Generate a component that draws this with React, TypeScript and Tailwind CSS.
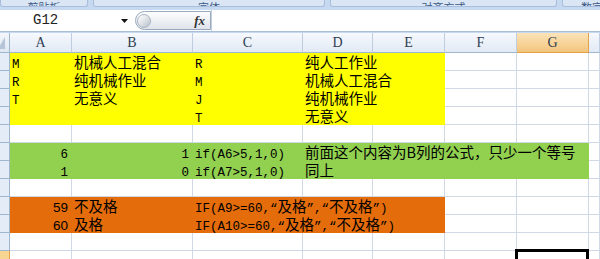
import type { ReactNode } from "react";

type Fill = "y" | "g" | "o";

type Cell = { v: ReactNode; right?: boolean };
type Row = { fill?: Fill; fillCols?: number; cells?: Record<number, Cell>; active?: boolean };

const colW = ["w-[62px]", "w-[121px]", "w-[110px]", "w-[70px]", "w-[72px]", "w-[72px]", "w-[72px]", "w-[11px]"];
const letters = ["A", "B", "C", "D", "E", "F", "G", "H"];

const fillCls: Record<Fill, string> = {
  y: "bg-[#ffff00] border-[#ffff00]",
  g: "bg-[#92d050] border-[#92d050]",
  o: "bg-[#e46c0a] border-[#e46c0a]",
};

const L = (s: string) => <span className="font-['Liberation_Mono',monospace] text-[12.5px]">{s}</span>;
const C = (s: string) => <span>{s}</span>;
const N = (s: string) => <span className="font-['Liberation_Sans',sans-serif] text-[13.5px]">{s}</span>;

const rows: Row[] = [
  { fill: "y", fillCols: 5, cells: { 0: { v: L("M") }, 1: { v: C("机械人工混合") }, 2: { v: L("R") }, 3: { v: C("纯人工作业") } } },
  { fill: "y", fillCols: 5, cells: { 0: { v: L("R") }, 1: { v: C("纯机械作业") }, 2: { v: L("M") }, 3: { v: C("机械人工混合") } } },
  { fill: "y", fillCols: 5, cells: { 0: { v: L("T") }, 1: { v: C("无意义") }, 2: { v: L("J") }, 3: { v: C("纯机械作业") } } },
  { fill: "y", fillCols: 5, cells: { 2: { v: L("T") }, 3: { v: C("无意义") } } },
  {},
  {
    fill: "g",
    fillCols: 7,
    cells: {
      0: { v: L("6"), right: true },
      1: { v: L("1"), right: true },
      2: { v: L("if(A6>5,1,0)") },
      3: { v: C("前面这个内容为B列的公式，只少一个等号") },
    },
  },
  {
    fill: "g",
    fillCols: 7,
    cells: { 0: { v: L("1"), right: true }, 1: { v: L("0"), right: true }, 2: { v: L("if(A7>5,1,0)") }, 3: { v: C("同上") } },
  },
  {},
  {
    fill: "o",
    fillCols: 5,
    cells: {
      0: { v: N("59"), right: true },
      1: { v: C("不及格") },
      2: { v: <>{L("IF(A9>=60,“")}{C("及格")}{L("”,“")}{C("不及格")}{L("”)")}</> },
    },
  },
  {
    fill: "o",
    fillCols: 5,
    cells: {
      0: { v: N("60"), right: true },
      1: { v: C("及格") },
      2: { v: <>{L("IF(A10>=60,“")}{C("及格")}{L("”,“")}{C("不及格")}{L("”)")}</> },
    },
  },
  {},
  { active: true },
];

function RibbonStrip() {
  const groups = [
    { w: "w-[88px]", label: "剪贴板" },
    { w: "w-[232px]", label: "字体" },
    { w: "w-[227px]", label: "对齐方式" },
    { w: "w-[60px]", label: "数字" },
  ];
  return (
    <div className="flex h-[7px] gap-[5px] overflow-hidden bg-[#c6d9f0]">
      {groups.map((g) => (
        <div
          key={g.label}
          className={`${g.w} flex shrink-0 items-end justify-center overflow-hidden rounded-b-[3px] border-b border-x border-[#a7bfdd] bg-[#dbe6f4]`}
        >
          <span className="-mb-[7px] font-['Noto_Sans_CJK_SC',sans-serif] text-[11px] leading-[11px] text-[#3c5a87]">
            {g.label}
          </span>
        </div>
      ))}
    </div>
  );
}

function FormulaBar() {
  return (
    <div className="flex h-[22px] border-b border-[#a9bfd6] bg-white">
      <div className="flex w-[135px] shrink-0 items-center">
        <span className="ml-[33px] font-['Liberation_Mono',monospace] text-[14px] text-[#222]">G12</span>
        <svg className="ml-[63px]" width="7" height="4" viewBox="0 0 7 4">
          <path d="M0 0h7L3.5 4z" fill="#111" />
        </svg>
      </div>
      <div className="my-[1px] flex w-[76px] shrink-0 items-center rounded-l-full border border-[#9aa9bd] bg-linear-to-b from-[#fdfdfe] via-[#eef1f5] to-[#dfe4eb]">
        <div className="ml-[1px] h-[14px] w-[14px] rounded-full border border-[#a9b3c0] bg-linear-to-br from-white via-[#dfe3e8] to-[#b8c0ca]" />
        <span className="ml-auto mr-[5px] font-['Liberation_Serif',serif] text-[13px] font-bold italic text-[#333]">
          fx
        </span>
      </div>
      <div className="flex-1 border-l border-[#c3cfdd] bg-white" />
    </div>
  );
}

function HeaderRow() {
  return (
    <div className="flex h-[20px]">
      <div className="relative w-[10px] shrink-0 border-r border-b border-[#9eb6ce] bg-linear-to-b from-[#f4f7fb] to-[#dfe7f2]">
        <svg className="absolute left-0 bottom-[3px]" width="7" height="12" viewBox="0 0 7 12">
          <path d="M0 12L7 12L7 0z" fill="#b5c4d8" transform="translate(-2 0)" />
        </svg>
      </div>
      {letters.map((l, i) => (
        <div
          key={l}
          className={`${colW[i]} flex shrink-0 items-center justify-center border-r border-b font-['Liberation_Serif',serif] text-[14px] text-[#2f3e52] ${
            l === "G"
              ? "border-[#e3a24a] bg-linear-to-b from-[#fbe3b7] to-[#f3c57d]"
              : "border-[#bfcde0] border-b-[#9eb6ce] bg-linear-to-b from-[#f6f9fd] to-[#e2eaf5]"
          }`}
        >
          {l === "H" ? "" : l}
        </div>
      ))}
    </div>
  );
}

function SheetRow({ row }: { row: Row }) {
  return (
    <div className="flex h-[18px]">
      <div
        className={`w-[10px] shrink-0 border-r border-b ${
          row.active ? "border-[#e3a24a] bg-[#f8d592]" : "border-[#9eb6ce] bg-[#e4ecf7]"
        }`}
      />
      {colW.map((w, i) => {
        const filled = row.fill && i < (row.fillCols ?? 0);
        const cell = row.cells?.[i];
        const sel = row.active && i === 6;
        return (
          <div
            key={i}
            className={`${w} ${sel ? "relative" : ""} h-[18px] shrink-0 whitespace-nowrap border-r border-b font-['Noto_Sans_CJK_SC',sans-serif] text-[14.5px] leading-[17px] text-black ${
              filled ? fillCls[row.fill!] : "border-[#d0d7e5] bg-white"
            } ${cell?.right ? "pr-[3px] text-right" : "pl-[2px]"}`}
          >
            {/* overflowing text must paint above the next cells' fill */}
            {cell && <span className="relative">{cell.v}</span>}
            {sel && (
              <div className="absolute -left-[2px] -top-[2px] -right-[1px] -bottom-[1px] border-[3px] border-black" />
            )}
          </div>
        );
      })}
    </div>
  );
}

export default function App() {
  return (
    <div className="h-[259px] w-[600px] overflow-hidden bg-[#c6d9f0]">
      <RibbonStrip />
      <div className="h-[3px] bg-[#c6d9f0]" />
      <FormulaBar />
      <div className="h-[1px] bg-[#c6d9f0]" />
      <HeaderRow />
      {rows.map((r, i) => (
        <SheetRow key={i} row={r} />
      ))}
    </div>
  );
}
